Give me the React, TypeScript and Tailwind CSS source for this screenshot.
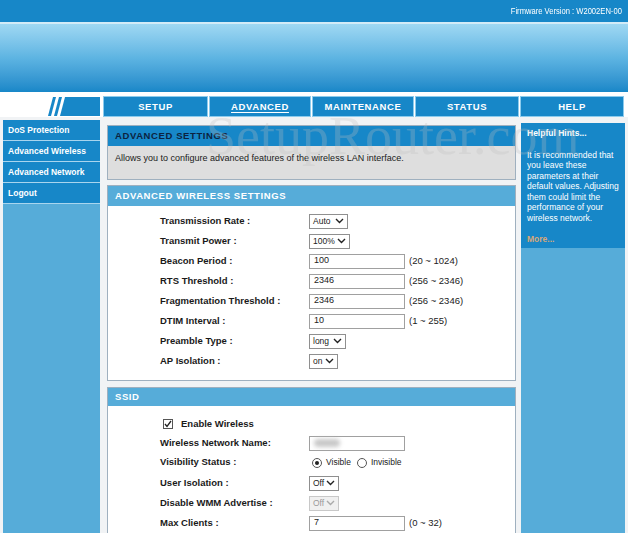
import React from 'react'

const DARK = 'bg-[#1787c8]'
const LIGHT = 'bg-[#56acd9]'

function Chevron({ color = '#222' }: { color?: string }) {
  return (
    <svg width="9" height="6" viewBox="0 0 9 6" className="ml-auto mr-[3px]">
      <path d="M1 1 L4.5 4.5 L8 1" fill="none" stroke={color} strokeWidth="1.4" />
    </svg>
  )
}

function FakeSelect({ value, w, disabled }: { value: string; w: string; disabled?: boolean }) {
  return (
    <div
      className={`flex h-[15px] items-center border pl-[3px] text-[8.5px] ${w} ${
        disabled ? 'border-[#c8c8c8] bg-[#f0f0f0] text-[#9a9a9a]' : 'border-[#8f8f8f] bg-white text-[#222]'
      }`}
    >
      <span>{value}</span>
      <Chevron color={disabled ? '#aaa' : '#222'} />
    </div>
  )
}

function TextBox({ value, blurred }: { value?: string; blurred?: boolean }) {
  return (
    <div className="flex h-[15px] w-[96px] items-center border border-[#a0a0a0] bg-white pl-[4px] text-[9px] text-[#222]">
      {blurred ? <div className="h-[8px] w-[26px] rounded-full bg-[#c8c8c8] blur-[2px]" /> : value}
    </div>
  )
}

function Row({ label, h = 'h-[20px]', children }: { label: string; h?: string; children: React.ReactNode }) {
  return (
    <div className={`flex items-center ${h}`}>
      <div className="w-[201px] shrink-0 pl-[52px] text-[9.5px] font-bold text-[#1a1a1a]">{label}</div>
      <div className="flex items-center">{children}</div>
    </div>
  )
}

function Range({ text }: { text: string }) {
  return <span className="ml-[4px] text-[9.5px] text-[#222]">{text}</span>
}

const tabs = [
  { name: 'SETUP', w: 'w-[105px]' },
  { name: 'ADVANCED', w: 'w-[102px]', active: true },
  { name: 'MAINTENANCE', w: 'w-[102px]' },
  { name: 'STATUS', w: 'w-[104px]' },
  { name: 'HELP', w: 'w-[104px]' },
]

const menu = ['DoS Protection', 'Advanced Wireless', 'Advanced Network', 'Logout']

export default function App() {
  return (
    <div className="relative h-[533px] w-[628px] overflow-hidden bg-[#f1f3f5] font-['Liberation_Sans',Arial,sans-serif]">
      {/* firmware bar */}
      <div className={`flex h-[22px] items-center justify-end pr-[6px] text-white ${DARK}`}>
        <span className="inline-block origin-right scale-x-[0.8] text-[9.5px]">Firmware Version : W2002EN-00</span>
      </div>
      <div className="h-[2px] bg-[#d3ebf7]" />
      <div className="h-[68px] bg-gradient-to-b from-[#9fd8f3] via-[#5db4e2] to-[#1787c8]" />
      <div className="h-[4px] bg-white" />

      {/* nav */}
      <div className="flex h-[21px] bg-white">
        <div className="flex w-[102px] items-center justify-end pr-[2px]">
          <svg width="52" height="19" viewBox="0 0 52 19">
            <polygon points="0,19 5,0 8,0 3,19" fill="#1787c8" />
            <polygon points="6,19 11,0 14,0 9,19" fill="#1787c8" />
            <polygon points="12,19 17,0 52,0 52,19" fill="#1787c8" />
          </svg>
        </div>
        {tabs.map((t) => (
          <div
            key={t.name}
            className={`ml-[1px] flex items-center justify-center border border-[#8ccbed] pt-[1px] text-[9.5px] font-bold tracking-[0.6px] text-white ${DARK} ${t.w}`}
          >
            <span className={t.active ? 'underline underline-offset-2' : ''}>{t.name}</span>
          </div>
        ))}
      </div>

      {/* body */}
      <div className="flex h-[416px]">
        {/* sidebar */}
        <div className={`ml-[3px] mt-[3px] flex w-[97px] flex-col ${LIGHT}`}>
          {menu.map((m) => (
            <div
              key={m}
              className={`flex h-[21px] items-center border-b border-[#a9d5ee] pl-[5px] text-[8.5px] font-bold text-white ${DARK}`}
            >
              {m}
            </div>
          ))}
        </div>

        {/* content */}
        <div className="ml-[7px] mt-[8px] flex w-[409px] flex-col">
          <div className="border border-[#9fb0bf]">
            <div className={`flex h-[20px] items-center pl-[7px] text-[9.5px] font-bold tracking-[0.6px] text-[#0c2340] ${DARK}`}>
              ADVANCED SETTINGS
            </div>
            <div className="h-[33px] bg-[#dedede] pl-[7px] pt-[6px] text-[9px] text-[#1a1a1a]">
              Allows you to configure advanced features of the wireless LAN interface.
            </div>
          </div>

          <div className="mt-[5px] border border-[#9fb0bf] bg-white">
            <div className={`flex h-[20px] items-center pl-[7px] text-[9.5px] font-bold tracking-[0.6px] text-white ${LIGHT}`}>
              ADVANCED WIRELESS SETTINGS
            </div>
            <div className="pb-[9px] pt-[5px]">
              <Row label="Transmission Rate :">
                <FakeSelect value="Auto" w="w-[39px]" />
              </Row>
              <Row label="Transmit Power :">
                <FakeSelect value="100%" w="w-[41px]" />
              </Row>
              <Row label="Beacon Period :">
                <TextBox value="100" />
                <Range text="(20 ~ 1024)" />
              </Row>
              <Row label="RTS Threshold :">
                <TextBox value="2346" />
                <Range text="(256 ~ 2346)" />
              </Row>
              <Row label="Fragmentation Threshold :">
                <TextBox value="2346" />
                <Range text="(256 ~ 2346)" />
              </Row>
              <Row label="DTIM Interval :">
                <TextBox value="10" />
                <Range text="(1 ~ 255)" />
              </Row>
              <Row label="Preamble Type :">
                <FakeSelect value="long" w="w-[37px]" />
              </Row>
              <Row label="AP Isolation :">
                <FakeSelect value="on" w="w-[29px]" />
              </Row>
            </div>
          </div>

          <div className="mt-[6px] flex-1 border border-b-0 border-[#9fb0bf] bg-white">
            <div className={`flex h-[18px] items-center pl-[7px] text-[9.5px] font-bold tracking-[0.6px] text-white ${LIGHT}`}>
              SSID
            </div>
            <div className="pt-[8px]">
              <div className="flex h-[20px] items-center pl-[55px]">
                <div className="flex h-[10px] w-[10px] items-center justify-center border border-[#555] bg-white">
                  <svg width="8" height="8" viewBox="0 0 8 8">
                    <path d="M1 4 L3 6.5 L7 1" fill="none" stroke="#222" strokeWidth="1.3" />
                  </svg>
                </div>
                <span className="ml-[8px] text-[9.5px] font-bold text-[#1a1a1a]">Enable Wireless</span>
              </div>
              <Row label="Wireless Network Name:" h="h-[18px]">
                <TextBox blurred />
              </Row>
              <Row label="Visibility Status :" h="h-[21px]">
                <div className="ml-[3px] flex items-center text-[8.5px] text-[#222]">
                  <span className="flex h-[10px] w-[10px] items-center justify-center rounded-full border border-[#555] bg-white">
                    <span className="h-[4px] w-[4px] rounded-full bg-[#222]" />
                  </span>
                  <span className="ml-[4px]">Visible</span>
                  <span className="ml-[6px] h-[10px] w-[10px] rounded-full border border-[#555] bg-white" />
                  <span className="ml-[4px]">Invisible</span>
                </div>
              </Row>
              <Row label="User Isolation :">
                <FakeSelect value="Off" w="w-[30px]" />
              </Row>
              <Row label="Disable WMM Advertise :">
                <FakeSelect value="Off" w="w-[30px]" disabled />
              </Row>
              <Row label="Max Clients :">
                <TextBox value="7" />
                <Range text="(0 ~ 32)" />
              </Row>
            </div>
          </div>
        </div>

        {/* hints */}
        <div className={`ml-[5px] mt-[6px] flex w-[104px] flex-col ${LIGHT}`}>
          <div className={`h-[125px] px-[6px] pt-[5px] text-[8.5px] leading-[10.5px] text-white ${DARK}`}>
            <div className="font-bold">Helpful Hints...</div>
            <p className="mt-[11px]">
              It is recommended that you leave these parameters at their default values. Adjusting them could limit the
              performance of your wireless network.
            </p>
            <div className="mt-[11px] font-bold text-[#d6a77a]">More...</div>
          </div>
        </div>
      </div>

      {/* watermark */}
      <div className="pointer-events-none absolute left-[206px] top-[118px] font-['Liberation_Serif',serif] text-[54px] leading-[36px] text-[rgba(190,190,190,0.28)]">
        SetupRouter.com
      </div>
    </div>
  )
}
